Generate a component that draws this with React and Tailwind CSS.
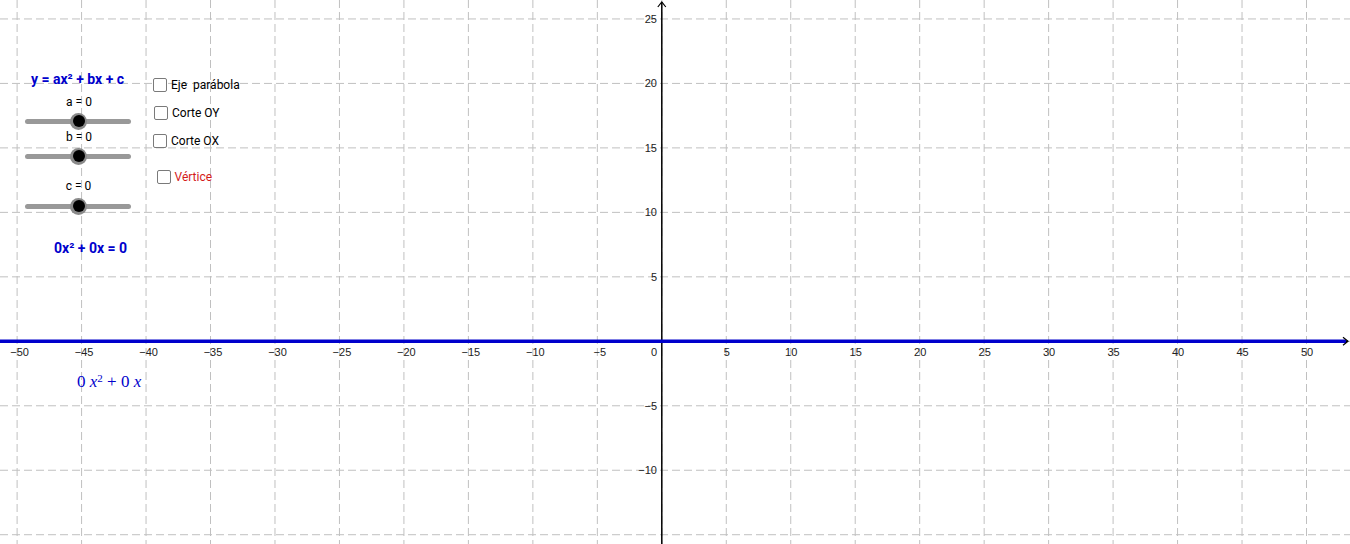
import React from 'react';

const ORIGIN_X = 661.8;
const ORIGIN_Y = 341.3;
const STEP = 64.47; // px per 5 units

const BLUE = '#0000cc';

const xTicks = [];
for (let k = -10; k <= 10; k++) xTicks.push(k * 5);
const yTicks = [];
for (let j = -3; j <= 5; j++) yTicks.push(j * 5);

const Graph = () => {
  const px = (v) => ORIGIN_X + (v / 5) * STEP;
  const py = (v) => ORIGIN_Y - (v / 5) * STEP;

  return (
    <svg className="absolute inset-0" width="1350" height="544" viewBox="0 0 1350 544">
      {/* grid */}
      {xTicks.map((v) => (
        <line
          key={'gx' + v}
          x1={px(v)}
          x2={px(v)}
          y1="0"
          y2="544"
          stroke="#c0c0c0"
          strokeWidth="1"
          strokeDasharray="8 4"
        />
      ))}
      {yTicks.map((v) => (
        <line
          key={'gy' + v}
          x1="0"
          x2="1350"
          y1={py(v)}
          y2={py(v)}
          stroke="#c0c0c0"
          strokeWidth="1"
          strokeDasharray="8 4"
        />
      ))}

      {/* axes */}
      <line x1={ORIGIN_X} x2={ORIGIN_X} y1="2" y2="544" stroke="#000" strokeWidth="1.5" />
      <polyline
        points={`${ORIGIN_X - 4},7 ${ORIGIN_X},2 ${ORIGIN_X + 4},7`}
        fill="none"
        stroke="#000"
        strokeWidth="1.2"
      />
      <line x1="0" x2="1348" y1={ORIGIN_Y} y2={ORIGIN_Y} stroke="#000" strokeWidth="1.5" />

      {/* graph of 0x² + 0x = 0 */}
      <line x1="0" x2="1346" y1={ORIGIN_Y} y2={ORIGIN_Y} stroke={BLUE} strokeWidth="3.5" />
      <polyline
        points={`1343,${ORIGIN_Y - 4} 1348,${ORIGIN_Y} 1343,${ORIGIN_Y + 4}`}
        fill="none"
        stroke="#000"
        strokeWidth="1.2"
      />

      {/* tick labels */}
      <g fontFamily="'Liberation Sans', Arial, sans-serif" fontSize="11" fill="#222">
        {xTicks
          .filter((v) => v !== 0)
          .map((v) => (
            <text key={'tx' + v} x={px(v) + (v < 0 ? 2.5 : 0.5)} y="355.5" textAnchor="middle">
              {v < 0 ? '\u2212' + Math.abs(v) : v}
            </text>
          ))}
        <text x="654" y="355.5" textAnchor="middle">
          0
        </text>
        {yTicks
          .filter((v) => v !== 0 && v !== -15)
          .map((v) => (
            <text key={'ty' + v} x="657" y={py(v) + 4} textAnchor="end">
              {v < 0 ? '\u2212' + Math.abs(v) : v}
            </text>
          ))}
      </g>
    </svg>
  );
};

const Slider = ({ label, labelClass, rowClass }) => (
  <>
    <div className={'text-center text-[12px] leading-[14px] text-black ' + labelClass}>{label}</div>
    <div className={'relative h-[17px] flex items-center ' + rowClass}>
      <div className="w-full h-[5px] rounded-full bg-[#999999]" />
      <div className="absolute left-[45px] top-0 w-[17px] h-[17px] rounded-full bg-[#8a8a8a] flex items-center justify-center">
        <div className="w-[12px] h-[12px] rounded-full bg-black" />
      </div>
    </div>
  </>
);

const Check = ({ label, className, red }) => (
  <div className={'flex items-center gap-[4px] h-[14px] ' + className}>
    <div className="w-[14px] h-[14px] rounded-[2px] border border-[#7a7a7a] bg-white" />
    <span
      className={'text-[12px] leading-[14px] whitespace-pre ' + (red ? 'text-[#d41919]' : 'text-black')}
    >
      {label}
    </span>
  </div>
);

export default function App() {
  return (
    <div className="relative w-[1350px] h-[544px] bg-white overflow-hidden font-['Roboto',sans-serif]">
      <Graph />

      {/* applet controls */}
      <div className="absolute left-[25px] top-[71px] flex gap-[22px]">
        <div className="w-[106px] flex flex-col">
          <div className="text-center pr-[1px] text-[14px] leading-[17px] font-bold text-[#0000cc] whitespace-nowrap">
            y = ax² + bx + c
          </div>
          <Slider label="a = 0" labelClass="mt-[7px] pl-[2px]" rowClass="mt-[3.5px]" />
          <Slider label="b = 0" labelClass="mt-[0px] pl-[2px]" rowClass="mt-[4px]" />
          <Slider label="c = 0" labelClass="mt-[14.5px] pl-[1px]" rowClass="mt-[4.5px]" />
          <div className="mt-[25.5px] pl-[29px] text-[14px] leading-[17px] font-bold text-[#0000cc] whitespace-nowrap">
            0x² + 0x = 0
          </div>
        </div>

        <div className="mt-[7px] flex flex-col">
          <Check label="Eje  parábola" className="" />
          <Check label="Corte OY" className="mt-[14px] ml-[1px]" />
          <Check label="Corte OX" className="mt-[14px]" />
          <Check label="Vértice" className="mt-[22px] ml-[3.5px] gap-[3px]" red />
        </div>
      </div>

      {/* LaTeX caption of the graph */}
      <div className="absolute left-[77px] top-[372px] text-[17px] leading-[20px] text-[#0000cc] whitespace-nowrap font-['Liberation_Serif',serif]">
        0 <i>x</i>
        <sup className="text-[11px]">2</sup> + 0 <i>x</i>
      </div>
    </div>
  );
}
